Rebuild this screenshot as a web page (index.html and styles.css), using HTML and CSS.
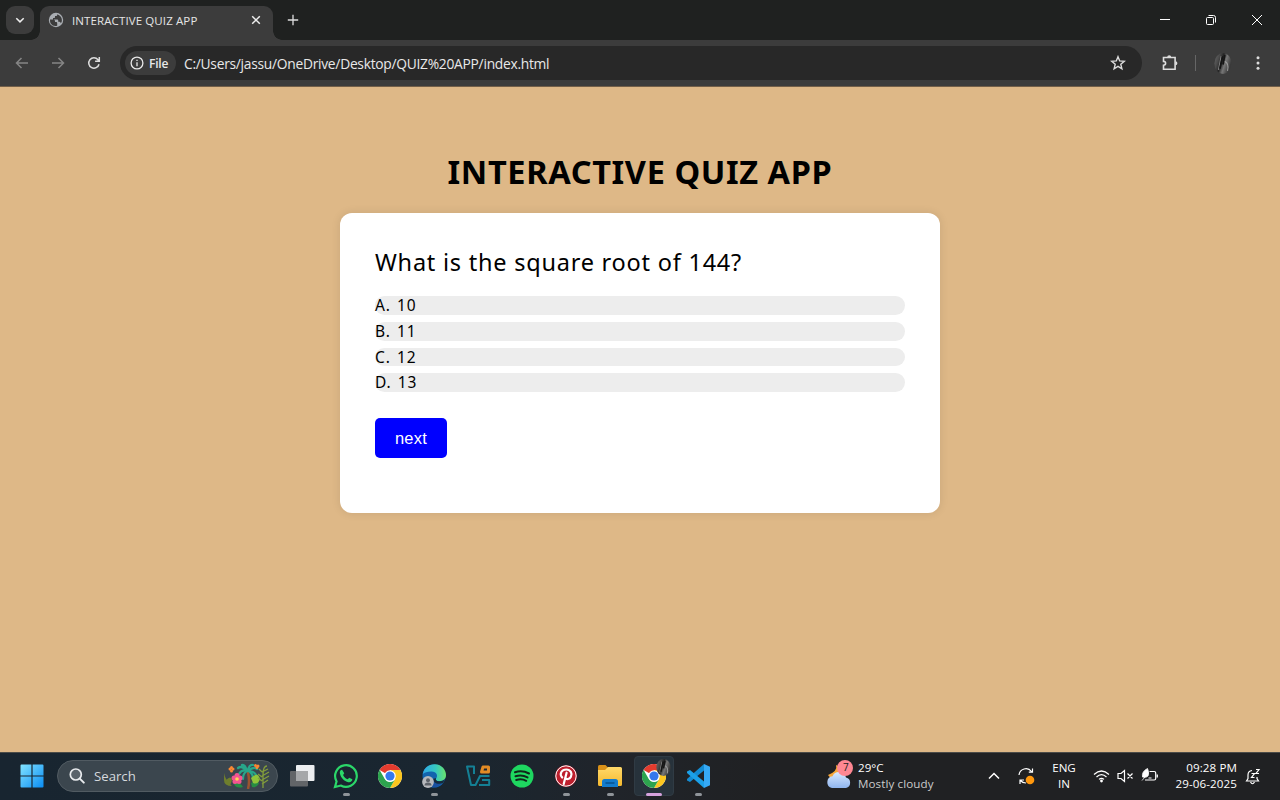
FILE: index.html
```html
<!DOCTYPE html>
<html lang="en">
<head>
<meta charset="utf-8">
<title>INTERACTIVE QUIZ APP</title>
<link rel="stylesheet" href="styles.css">
</head>
<body>
<svg class="defs" width="0" height="0" aria-hidden="true">
  <defs>
    <linearGradient id="win" x1="0" y1="0" x2="1" y2="1"><stop offset="0" stop-color="#82e3ff"/><stop offset="1" stop-color="#0a8df4"/></linearGradient>
    <linearGradient id="folder" x1="0" y1="0" x2="0" y2="1"><stop offset="0" stop-color="#ffd96a"/><stop offset="1" stop-color="#f5b92e"/></linearGradient>
    <linearGradient id="cloud" x1="0" y1="0" x2="0" y2="1"><stop offset="0" stop-color="#d9e9ff"/><stop offset="1" stop-color="#8fb5ee"/></linearGradient>
    <linearGradient id="edgeTop" x1="0" y1="0.5" x2="1" y2="0.5"><stop offset="0" stop-color="#2fa9e6"/><stop offset=".55" stop-color="#36c7c0"/><stop offset="1" stop-color="#69e36c"/></linearGradient>
    <linearGradient id="photo" x1="0" y1="0" x2="1" y2=".4"><stop offset="0" stop-color="#6a6a6a"/><stop offset=".3" stop-color="#4a4a4a"/><stop offset=".5" stop-color="#252525"/><stop offset=".7" stop-color="#777"/><stop offset="1" stop-color="#3a3a3a"/></linearGradient>
    <symbol id="chrome" viewBox="0 0 24 24">
      <circle cx="12" cy="12" r="12" fill="#fff"/>
      <path d="M12 12 1.600 6A12 12 0 0 1 22.400 6H12Z" fill="#e33b2e"/>
      <path d="M12 6h10.400A12 12 0 0 1 12 24l5.200-9Z" fill="#fcc61f"/>
      <path d="M1.600 6 6.800 15A6 6 0 0 0 17.200 15L12 24A12 12 0 0 1 1.600 6Z" fill="#2da44e"/>
      <circle cx="12" cy="12" r="5.800" fill="#fff"/><circle cx="12" cy="12" r="4.600" fill="#3478ec"/>
    </symbol>
    <symbol id="avatar" viewBox="0 0 20 20" preserveAspectRatio="none">
      <ellipse cx="10" cy="10" rx="9.500" ry="10" fill="url(#photo)"/>
      <path d="M5 16 8 3" stroke="#8a8a8a" stroke-width="1.200"/><path d="m6.500 15 3-12M10 11l2-9" stroke="#151515" stroke-width="2"/>
      <path d="M12 8q5 2 3 9" stroke="#999" stroke-width="1.300" fill="none"/>
    </symbol>
  </defs>
</svg>

<div class="screen">
  <div class="tabstrip">
    <div class="tab-search"><svg width="10" height="10" viewBox="0 0 10 10"><path d="m1.300 3.200 3.700 3.700 3.700-3.700"/></svg></div>
    <div class="tab">
      <svg class="globe" width="16" height="16" viewBox="0 0 16 16"><circle cx="8" cy="8" r="7.200" fill="#a9adb2"/><path d="M2 7.500h3.500q1.500 0 1.500 1.500v1h1.300q.9 0 .9.900v2.900Q5 14.800 2.700 11.500 1.900 9.800 2 7.500ZM9.200 2.200v.9q0 1-1 1H7v1.200q0 .8-.8.8H5v1.300h4.300q.9 0 .9.900v1.400h1q1 0 1.300.9l.4.700Q14 10 13.900 8 13.600 3.800 9.200 2.200Z" fill="#3c3c3c"/></svg>
      <span class="tab-title">INTERACTIVE QUIZ APP</span>
      <svg class="tab-close" width="10" height="10" viewBox="0 0 10 10"><path d="m1.200 1.200 7.600 7.600m0-7.600L1.200 8.800"/></svg>
    </div>
    <svg class="new-tab" width="12" height="12" viewBox="0 0 12 12"><path d="M6 .8v10.400M.8 6h10.400"/></svg>
    <div class="window-controls">
      <svg width="12" height="12" viewBox="0 0 12 12"><path d="M1 5.500h10"/></svg>
      <svg width="12" height="12" viewBox="0 0 12 12"><rect x="1.500" y="3.500" width="7" height="7" rx="1"/><path d="M3.500 1.500h5a2 2 0 0 1 2 2v5"/></svg>
      <svg width="12" height="12" viewBox="0 0 12 12"><path d="m1 1 10 10M11 1 1 11"/></svg>
    </div>
  </div>

  <div class="toolbar">
    <svg class="nav dim" width="16" height="16" viewBox="0 0 16 16"><path d="M14 8H2.500M7.500 3l-5 5 5 5"/></svg>
    <svg class="nav dim" width="16" height="16" viewBox="0 0 16 16"><path d="M2 8h11.500M8.500 3l5 5-5 5"/></svg>
    <svg class="nav" width="16" height="16" viewBox="0 0 16 16"><path d="M13 9.200A5.200 5.200 0 1 1 12 4.700L13.200 6M13.300 2v4.200H9.100"/></svg>
    <div class="omnibox">
      <div class="file-chip"><svg width="14" height="14" viewBox="0 0 14 14"><circle cx="7" cy="7" r="5.900"/><path d="M7 6.300v3.900M7 3.700v1.400"/></svg><span>File</span></div>
      <span class="url">C:/Users/jassu/OneDrive/Desktop/QUIZ%20APP/index.html</span>
      <svg class="star" width="16" height="16" viewBox="0 0 16 16"><path d="m8 1.700 1.700 4.200 4.600.4-3.500 3 1.100 4.500L8 11.400l-3.900 2.400 1.100-4.500-3.500-3 4.600-.4Z"/></svg>
    </div>
    <svg class="puzzle" width="18" height="18" viewBox="0 0 18 18"><path d="M2.500 3.500h11.600v11.700H2.500v-4q2.100 0 2.100-1.900T2.500 7.400Z"/><path class="knobs" d="M6.200 3.200a2 2 0 0 1 4 0ZM14.400 7.300a2 2 0 0 1 0 4Z"/></svg>
    <span class="divider"></span>
    <svg class="profile" width="18" height="21"><use href="#avatar" width="18" height="21"/></svg>
    <svg class="more" width="4" height="16" viewBox="0 0 4 16"><circle cx="2" cy="2.700" r="1.500"/><circle cx="2" cy="8" r="1.500"/><circle cx="2" cy="13.300" r="1.500"/></svg>
  </div>

  <main class="page">
    <h1 class="heading">INTERACTIVE QUIZ APP</h1>
    <section class="quiz">
      <h2 class="question">What is the square root of 144?</h2>
      <ul class="options">
        <li>A. 10</li><li>B. 11</li><li>C. 12</li><li>D. 13</li>
      </ul>
      <button class="next">next</button>
    </section>
  </main>

  <footer class="taskbar">
    <div class="start"><svg width="24" height="24" viewBox="0 0 24 24"><path d="M.5 1.500q0-1 1-1h9.900v10.900H.5ZM12.600.5h9.900q1 0 1 1v9.900H12.600ZM.5 12.600h10.900v10.900H1.500q-1 0-1-1ZM12.600 12.600h10.900v9.900q0 1-1 1h-9.900Z" fill="url(#win)"/></svg></div>
    <div class="search">
      <svg width="16" height="16" viewBox="0 0 16 16"><circle cx="6.800" cy="6.500" r="5.500" fill="#59636b" stroke="#e8ebee" stroke-width="1.700"/><path d="m10.800 10.600 4 4" stroke="#e8ebee" stroke-width="2" stroke-linecap="round"/></svg>
      <span>Search</span>
      <svg class="garden" width="48" height="26" viewBox="0 0 48 26">
        <path d="M25 26q2-7 0-17" stroke="#9b542f" stroke-width="2.500" fill="none"/>
        <path d="M24 8Q19 6 16 11M24 8q-5-6-9-3m9 3q-2-7-5-6m6 6q1-7 5-6m-5 6q6-5 9-2m-9 2q6 0 8 4M24 8q-4 2-4 8M26 8q4 3 4 7" stroke="#27a68a" stroke-width="2.200" fill="none" stroke-linecap="round"/>
        <path d="M1 10q1 7 8 13-8 0-8-6M3 17q5-5 6 0l-2 6" fill="#6e7e2d"/><path d="M11 20q6-1 9 4-7 2-9-3m17-1q5-3 8 0-2 5-7 4" fill="#268d43"/>
        <path d="M28 15q7-7 9 1-2 6-7 4Z" fill="#8fc43a"/><path d="M40 25V12q0-9 4-9M39 9l6-3m-6 7 7-4m-7 8 7-4m-7 8 6-4m-6-8-3-3m3 8-4-3m4 7-4-3" fill="none" stroke="#839d3b" stroke-width="1.300"/>
        <g fill="#fa8833"><circle cx="7" cy="6" r="1.500"/><circle cx="10" cy="6" r="1.500"/><circle cx="8.500" cy="4.500" r="1.500"/><circle cx="8.500" cy="8" r="1.500"/><circle cx="32.500" cy="2.500" r="1.500"/><circle cx="35" cy="3" r="1.500"/><circle cx="34" cy="4.500" r="1.500"/></g>
        <g fill="#f35491"><circle cx="14" cy="12.500" r="2.500"/><circle cx="17" cy="15" r="2.500"/><circle cx="16" cy="18.500" r="2.500"/><circle cx="12" cy="18.500" r="2.500"/><circle cx="11" cy="15" r="2.500"/></g><circle cx="14" cy="16" r="1.800" fill="#ffd458"/>
      </svg>
    </div>
    <div class="apps">
      <div class="app"><svg width="26" height="24" viewBox="0 0 26 24"><rect x="1" y="7" width="18" height="15.500" rx="1" fill="#626568"/><rect x="7" y="1" width="18.500" height="16" rx="1" fill="#eceef0"/><path d="M7 7h12v10H7Z" fill="#a5a7a9"/></svg></div>
      <div class="app running"><svg width="26" height="26" viewBox="0 0 24 24"><path d="M1.800 22.200 3.300 17A10 10 0 1 1 7.200 20.800Z" fill="none" stroke="#2bd769" stroke-width="2"/><path d="M8.400 6.200C7 6.400 6 7.700 6.300 9.400c.8 4.100 4 7.400 7.900 8.300 2 .4 3.600-.8 3.700-2.600l-3-1.500-1.200 1.500c-2-.7-3.500-2.100-4.400-4.100l1.100-1.500Z" fill="#2bd769"/></svg></div>
      <div class="app"><svg width="24" height="24"><use href="#chrome" width="24" height="24"/></svg></div>
      <div class="app running"><svg width="24" height="24" viewBox="0 0 24 24"><circle cx="12" cy="12" r="11.500" fill="#1264ae"/><path d="M.8 10C2 3.500 7 0 13 .3c7 .4 11 5.500 11 10.800 0 4-3 6-6.300 6-3 0-4.500-1.500-3.500-2.700 2-2.500.5-6.600-4.600-6.800C5.500 7.500 2.500 8.500.8 10Z" fill="url(#edgeTop)"/><path d="M8.600 10.500c-2 6 4 10.500 12 7.500-2 4-7 6-11 5" fill="#1950a0"/><path d="M14 14c-1 2 1 4 5 3 2-.4 3-1 4-2l-2 4c-5 2-10 0-10-4Z" fill="#172b3c"/><circle cx="6" cy="18" r="5.900" fill="#b6b8bc"/><circle cx="6" cy="16.200" r="2" fill="#5c6168"/><path d="M2.500 21.500q0-3 3.500-3t3.500 3Z" fill="#5c6168"/></svg></div>
      <div class="app"><svg width="26" height="24" viewBox="0 0 26 24"><g fill="none" stroke-width="2" stroke-linejoin="round"><path d="M9 10V2.500H2L6 21h4.500L15 12h9.500" stroke="#148095"/><path d="M17 16h7.200v5H14" stroke="#148095"/><path d="M18 3h5.500v5H16.500Z" stroke="#e18b25" stroke-width="3"/></g></svg></div>
      <div class="app"><svg width="24" height="24" viewBox="0 0 24 24"><circle cx="12" cy="12" r="11.500" fill="#1ed760"/><path d="M5 8.300q7-2.500 14 1.200M5.500 12.200q6.500-1.900 12 1.200M6.200 16q5.500-1.600 10 .8" fill="none" stroke="#11251a" stroke-width="2" stroke-linecap="round"/></svg></div>
      <div class="app running"><svg width="24" height="24" viewBox="0 0 24 24"><circle cx="12" cy="12" r="10.800" fill="#bd1f2d"/><circle cx="12" cy="12" r="10.200" fill="none" stroke="#fff" stroke-width="1"/><path d="M8.200 13.500C4.800 9.500 8 5.500 12.300 5.500s6.300 3.900 4.600 7.300c-1.300 2.700-4.400 2.800-5.300 1.200M12.600 8.700 9.700 20" fill="none" stroke="#fff" stroke-width="2.200" stroke-linecap="round"/></svg></div>
      <div class="app running"><svg width="24" height="24" viewBox="0 0 24 24"><path d="M0 2.500Q0 1 1.500 1h6L10 3.500V8H0Z" fill="#d99118"/><path d="M0 6h7l3-3h12.500Q24 3 24 4.500v16q0 1.500-1.500 1.500h-21Q0 22 0 20.500Z" fill="url(#folder)"/><path d="M4 23v-5.500Q4 15 6.500 15h11q2.500 0 2.500 2.500V23Z" fill="#137bcd"/><path d="M7.500 19h9" stroke="#07518e" stroke-width="1.500"/></svg></div>
      <div class="app running active"><svg width="24" height="24"><use href="#chrome" width="24" height="24"/></svg><svg class="badge-photo" width="15" height="17"><use href="#avatar" width="15" height="17"/></svg></div>
      <div class="app running"><svg width="24" height="24" viewBox="0 0 24 24"><path d="M18 0 24 2.700v18.600L18 24Z" fill="#36a9f5"/><path d="M18 0v6.500L4 18 1 16.500V15Z" fill="#128bd3"/><path d="M18 24v-6.500L4 6 1 7.500V9Z" fill="#1ba0e8"/></svg></div>
    </div>
    <div class="weather">
      <svg width="27" height="30" viewBox="0 0 27 30"><path d="M10 5q2 6-8 10 3 5 10 4l8-9Z" fill="#f6a638"/><path d="M6 28a6 6 0 0 1 .5-11.800A7.200 7.200 0 0 1 20 17.500 5.400 5.400 0 0 1 20 28Z" fill="url(#cloud)"/><circle cx="19" cy="8" r="8" fill="#ff8792"/></svg>
      <span class="badge">7</span>
      <div><p>29°C</p><p class="muted">Mostly cloudy</p></div>
    </div>
    <div class="tray">
      <svg class="chevron" width="12" height="8" viewBox="0 0 12 8"><path d="m1 6.500 5-5 5 5"/></svg>
      <svg class="sync" width="18" height="18" viewBox="0 0 18 18"><path d="M2 8A7 7 0 0 1 14.500 4.500M15.500 1.500v3.700h-3.700M9 16a7 7 0 0 1-5.500-2.500M3 17v-4h4"/><circle cx="13" cy="13" r="4.300" fill="#ff980e" stroke="none"/></svg>
      <p class="language">ENG<br>IN</p>
      <svg class="wifi" width="17" height="14" viewBox="0 0 17 14"><path d="M1 5.500q7.500-7 15 0M3.500 8q5-4.800 10 0M6 10.400q2.500-2.200 5 0"/><circle cx="8.500" cy="12" r="1.400" fill="#fff" stroke="none"/></svg>
      <svg class="volume" width="17" height="14" viewBox="0 0 17 14"><path d="M1 4.500h3l3.500-3v11l-3.500-3H1ZM10.500 4.500l5 5m0-5-5 5"/></svg>
      <svg class="battery" width="18" height="16" viewBox="0 0 18 16"><path d="M8.500 3.500h4.700q1.500 0 1.500 1.500v5.500q0 1.500-1.500 1.500H4M16.300 6.500v3M7.500 10h3"/><path d="M6.500.5Q.5 3.500 1.500 9q5.500 1 6-2.500Q8 4 6.500.5ZM1 12.500 4 9" fill="#fff" stroke-width=".8"/></svg>
      <p class="clock">09:28 PM<br>29-06-2025</p>
      <svg class="bell" width="16" height="17" viewBox="0 0 16 17"><path d="M7 2.500Q3 3 3 7v3.500L1.500 13h12L12 10.500V9M5.500 14q2 3.500 4 0M6.500 5.500h3l-3 4h3M11 1.500h3l-3 4h3"/></svg>
    </div>
  </footer>
</div>
</body>
</html>
```
FILE: styles.css
```css
* { box-sizing: border-box; }
body { margin: 0; background: #deb887; font-family: "Open Sans", "Noto Sans", sans-serif; }
svg { display: block; flex: none; fill: none; }
p, ul { margin: 0; padding: 0; }
.defs { position: absolute; }
.screen { width: 1280px; height: 800px; display: flex; flex-direction: column; overflow: hidden; }

.tabstrip { height: 40px; flex: none; display: flex; align-items: center; background: #1f2120; padding-left: 6px; }
.tab-search { width: 28px; height: 28px; border-radius: 9px; background: #3c3c3c; display: grid; place-items: center; margin-right: 6px; }
.tab-search path, .tab-close path { stroke: #eee; stroke-width: 1.500; }
.tab { position: relative; width: 233px; height: 34px; align-self: flex-end; display: flex; align-items: center; padding: 0 12px 6px 8px; border-radius: 9px 9px 0 0; background: #3c3c3c; }
.tab::before, .tab::after { content: ""; position: absolute; bottom: 0; width: 9px; height: 9px; }
.tab::before { right: 100%; background: radial-gradient(circle at 0 0, transparent 8.500px, #3c3c3c 9px); }
.tab::after { left: 100%; background: radial-gradient(circle at 100% 0, transparent 8.500px, #3c3c3c 9px); }
.tab-title { margin-left: 8px; color: #e5e5e5; font-size: 11.500px; letter-spacing: .11px; white-space: nowrap; }
.tab-close { margin-left: auto; }
.new-tab { margin-left: 14px; stroke: #ddd; stroke-width: 1.300; }
.window-controls { margin-left: auto; display: flex; gap: 34px; padding-right: 17px; stroke: #fff; stroke-width: 1; }

.toolbar { height: 47px; flex: none; display: flex; align-items: center; padding: 0 20px 0 14px; background: #3c3c3c; border-bottom: 1px solid #725f49; }
.nav { margin-right: 20px; stroke: #ddd; stroke-width: 1.500; }
.dim { stroke: #858585; }
.omnibox { width: 1022px; height: 34px; margin-left: -2px; border-radius: 17px; background: #282828; display: flex; align-items: center; padding: 0 16px 0 5px; }
.file-chip { width: 51px; height: 24px; border-radius: 12px; background: #3c3c3c; display: flex; align-items: center; gap: 5px; padding-left: 5px; color: #e9e9e9; font-size: 12px; font-weight: 600; letter-spacing: -.2px; }
.file-chip svg { stroke: #e9e9e9; stroke-width: 1.300; }
.url { margin: 1px 0 0 8px; color: #e8e8e8; font-size: 13.800px; letter-spacing: -.27px; white-space: nowrap; }
.star { margin-left: auto; stroke: #ddd; stroke-width: 1.400; }
.puzzle { margin-left: 19px; stroke: #ddd; stroke-width: 1.600; }
.knobs { fill: #ddd; stroke: none; }
.divider { width: 1px; height: 16px; background: #666; margin: 0 18px 0 16px; }
.more { margin-left: auto; fill: #ddd; }

.page { flex: 1; background: #deb887; display: flex; flex-direction: column; align-items: center; padding-top: 61px; }
.heading { margin: 0 0 17px; color: #000; font: 700 32.500px/48px "Noto Sans", sans-serif; letter-spacing: .65px; word-spacing: -.2px; white-space: nowrap; }
.quiz { width: 600px; height: 300px; background: #fff; border-radius: 12px; padding: 34px 35px; box-shadow: 0 0 10px rgba(0,0,0,.1); color: #000; }
.question { margin: 0 0 19px; font: 400 23.500px/30px "Noto Sans", sans-serif; letter-spacing: .77px; white-space: nowrap; }
.options { list-style: none; display: grid; gap: 7px; }
.options li { height: 18.800px; border-radius: 9.400px; background: #ededed; font: 400 15.500px/18.800px "Noto Sans", sans-serif; letter-spacing: .9px; word-spacing: 1.200px; }
.next { display: block; width: 72px; height: 40px; margin-top: 26px; padding: 0; border: 0; border-radius: 5px; background: #00f; color: #fff; font: 16.500px/41px "Liberation Sans", Arial, sans-serif; letter-spacing: .25px; }

.taskbar { height: 48px; flex: none; display: flex; align-items: center; padding-bottom: 1px; background: linear-gradient(90deg, #182530, #1a2630 36%, #20242a 48%, #202123 60%); border-top: 1px solid #4b4b48; color: #fff; font-size: 11.600px; }
.start { width: 57px; padding-left: 20px; }
.search { width: 221px; height: 32px; border-radius: 16px; display: flex; align-items: center; padding: 0 6px 0 11px; background: #3b464e; border: 1px solid #515b62; color: #d5d9dd; font-size: 13.200px; gap: 9px; }
.garden { margin-left: auto; }
.apps { display: flex; margin-left: 1.500px; }
.app { position: relative; width: 44px; height: 44px; display: grid; place-items: center; }
.running::after { content: ""; position: absolute; bottom: 2px; left: 19px; width: 7px; height: 3px; border-radius: 2px; background: #8f9499; }
.active::before { content: ""; position: absolute; inset: 2px; border: 1px solid #303b44; border-radius: 4px; background: #27323b; }
.active svg { position: relative; }
.active::after { left: 14px; width: 16px; background: #d5a2dd; }
.active .badge-photo { position: absolute; right: 5px; top: 5px; }
.weather { position: relative; margin-left: 106.500px; display: flex; gap: 5px; line-height: 16px; }
.weather .muted { color: #cbcbcb; letter-spacing: .1px; }
.badge { position: absolute; left: 17px; top: -1px; color: #222; font-size: 10px; }
.tray { margin-left: auto; display: flex; align-items: center; line-height: 16px; padding-right: 19px; stroke: #fff; stroke-width: 1.200; }
.chevron { margin-right: 17px; stroke-width: 1.500; }
.sync { margin-right: 16px; }
.language { width: 26px; text-align: center; margin-right: 16px; }
.wifi { margin-right: 7px; }
.volume { margin-right: 7px; }
.battery { margin-right: 14px; }
.clock { width: 64px; text-align: right; margin-right: 8px; white-space: nowrap; letter-spacing: .1px; }
```
